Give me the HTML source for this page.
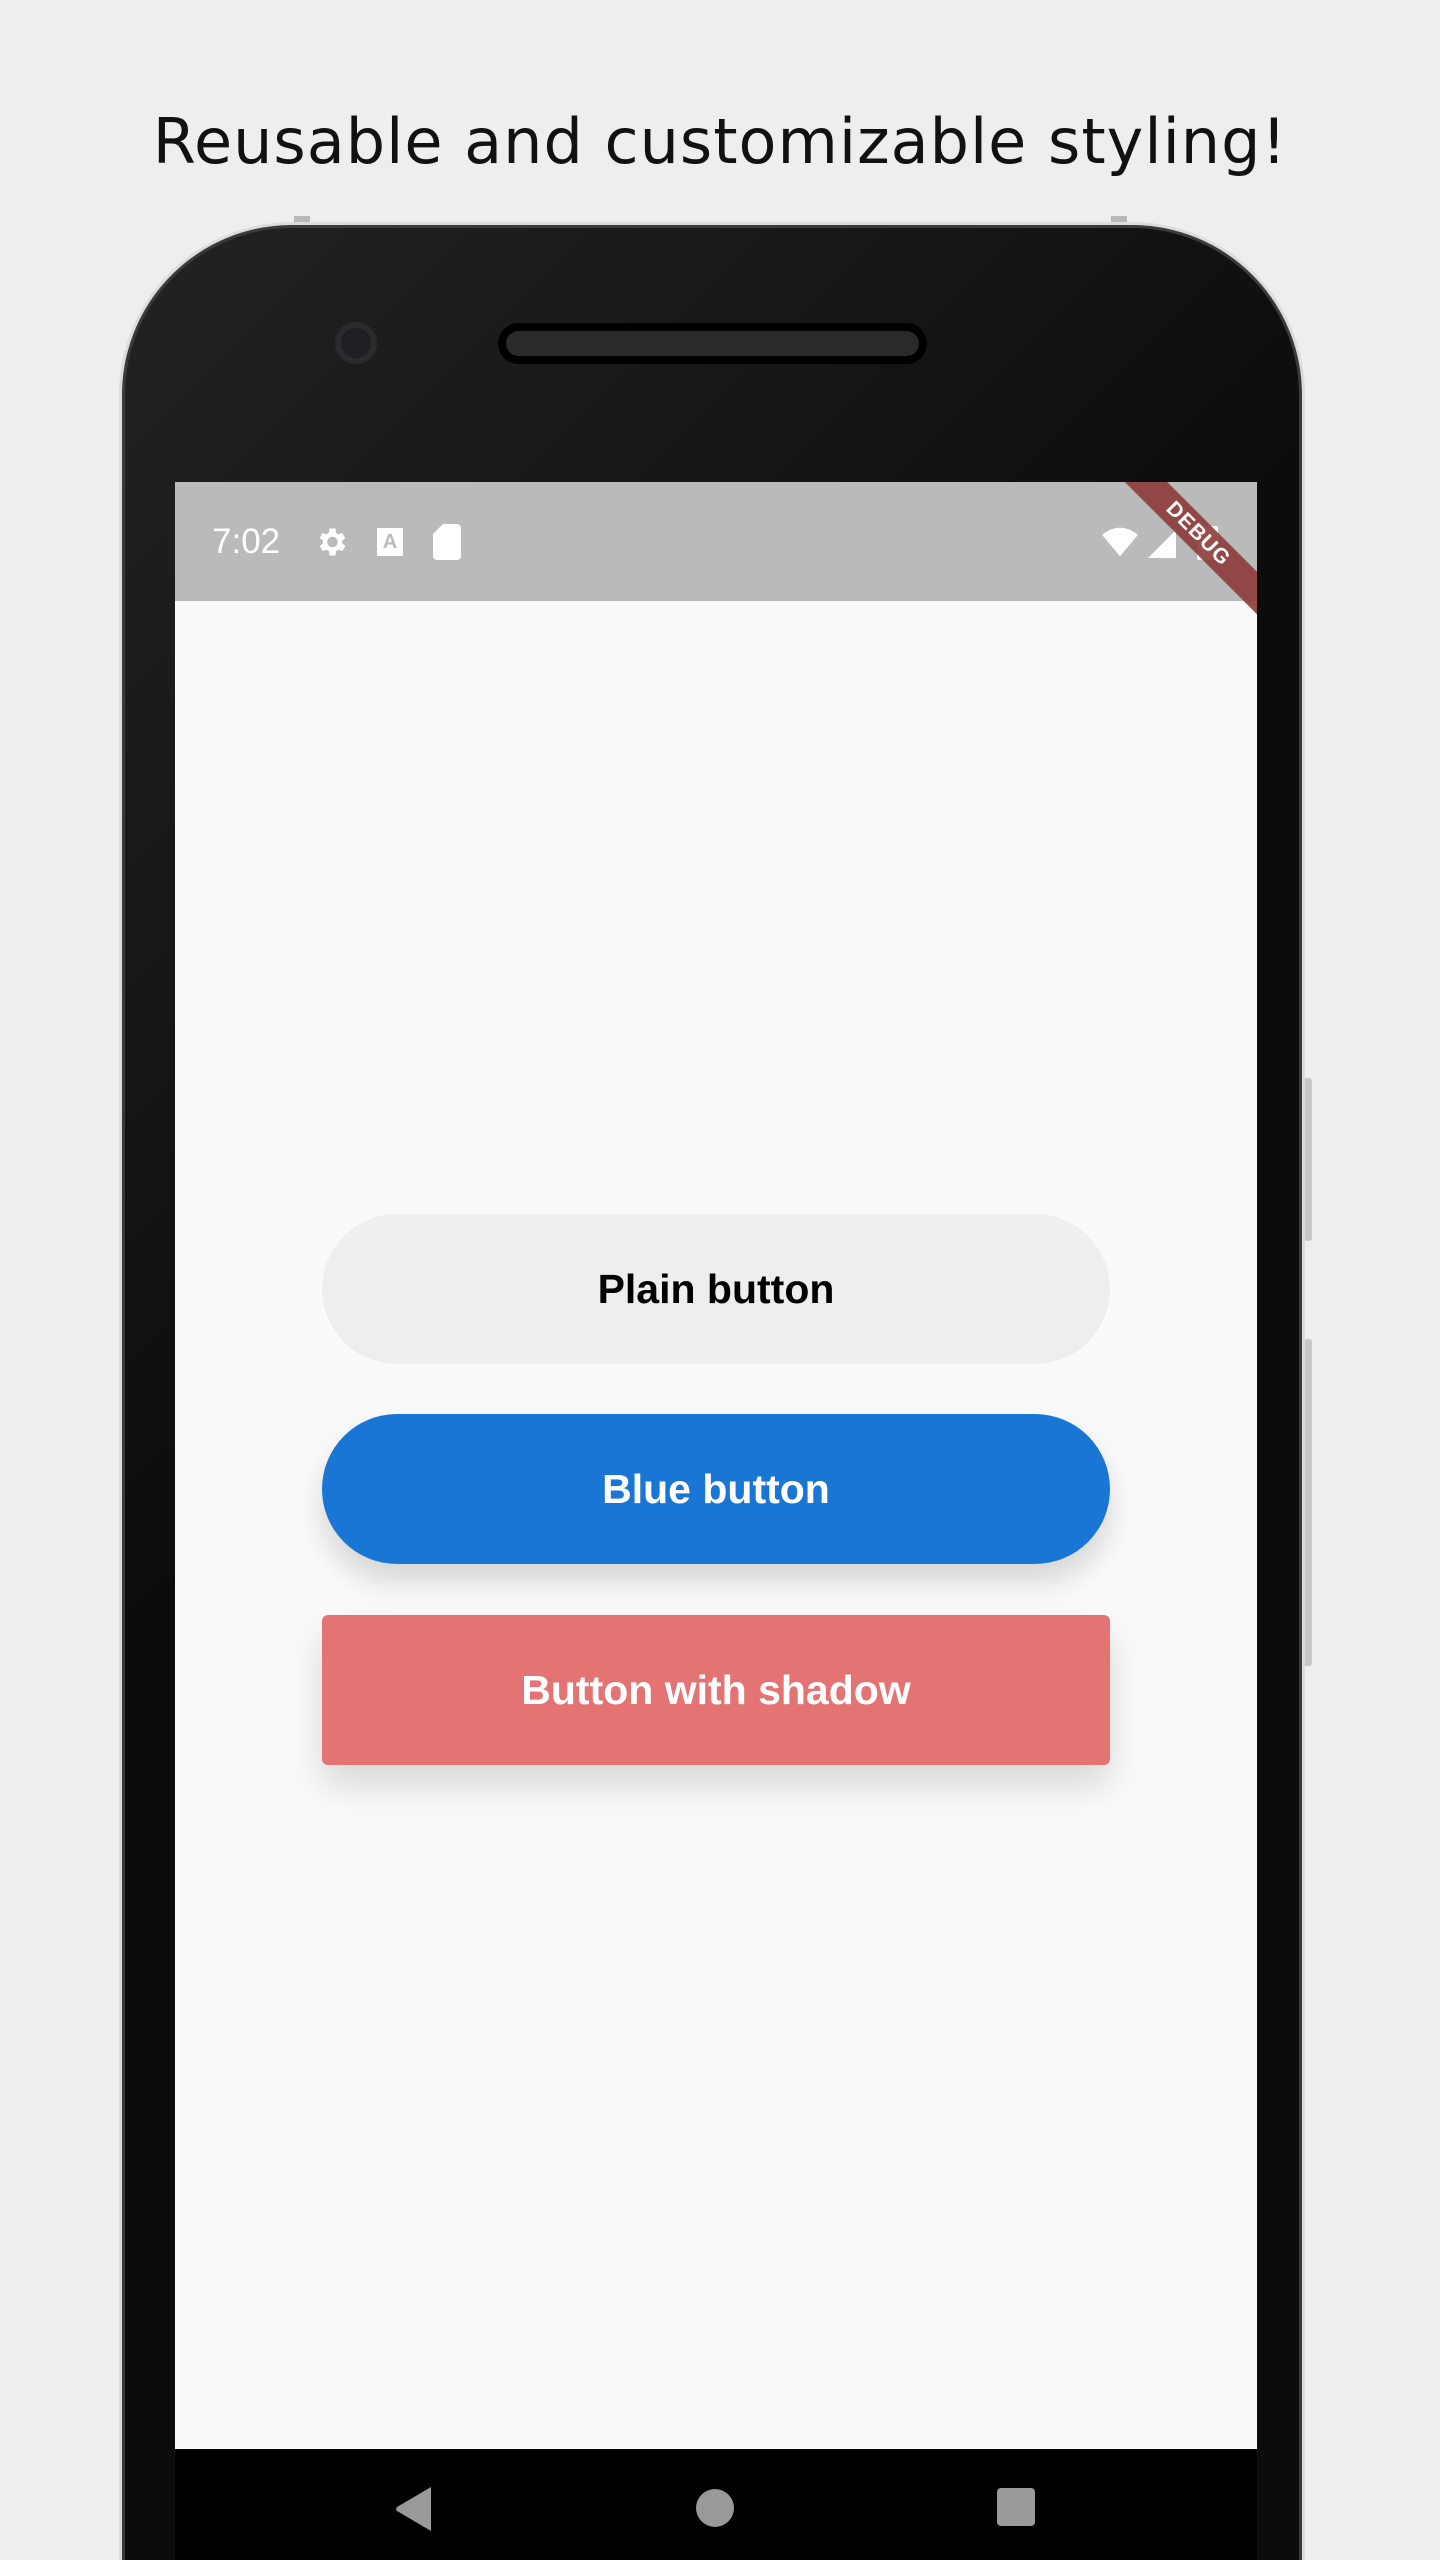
<!DOCTYPE html>
<html><head><meta charset="utf-8"><style>
*{margin:0;padding:0;box-sizing:border-box}
html,body{width:1440px;height:2560px;overflow:hidden}
body{background:#eeeeee;position:relative;font-family:"Liberation Sans",sans-serif}
.title{position:absolute;top:105px;left:0;width:1440px;text-align:center;font-family:"DejaVu Sans",sans-serif;font-size:62px;color:#111;letter-spacing:1px}
.tab{position:absolute;background:#b8b8b8;width:16px;height:14px;top:216px}
.phone{position:absolute;left:122px;top:225px;width:1180px;height:2400px;border-radius:170px 170px 0 0;background:linear-gradient(135deg,#232323,#0c0c0c 40%);border:3px solid #3a3a3a;box-shadow:0 0 0 3px #dcdcdc}
.sidebtn{position:absolute;background:#c8c8c8;width:8px;border-radius:3px}
.cam{position:absolute;left:335px;top:322px;width:42px;height:42px;border-radius:50%;background:#202024;border:6px solid #2b2b2e}
.spk{position:absolute;left:498px;top:323px;width:429px;height:41px;border-radius:21px;background:#000}
.spk div{position:absolute;left:8px;top:8px;right:8px;bottom:8px;border-radius:13px;background:#2a2a2a}
.screen{position:absolute;left:175px;top:482px;width:1082px;height:1967px;background:#fafafa;overflow:hidden}
.status{position:absolute;left:0;top:0;width:100%;height:119px;background:#bababa;color:#fff}
.nav{position:absolute;left:175px;top:2449px;width:1082px;height:111px;background:#000}
.btn{position:absolute;left:322px;width:788px;height:150px;display:flex;align-items:center;justify-content:center;font-weight:bold;font-size:41px}
</style></head><body>
<div class="title">Reusable and customizable styling!</div>
<div class="tab" style="left:294px"></div><div class="tab" style="left:1111px"></div>
<div class="sidebtn" style="left:1304px;top:1078px;height:163px"></div>
<div class="sidebtn" style="left:1304px;top:1339px;height:327px"></div>
<div class="phone"></div>
<div class="cam"></div>
<div class="spk"><div></div></div>
<div class="screen">
 <div class="status">
  <div style="position:absolute;left:37px;top:40px;font-size:35px">7:02</div>
  <svg style="position:absolute;left:138px;top:42px" width="36" height="36" viewBox="0 0 24 24"><path fill="#fff" d="M19.4 13a7.5 7.5 0 000-2l2.1-1.6-2-3.5-2.5 1a7 7 0 00-1.7-1L15 3h-4l-.4 2.9a7 7 0 00-1.7 1l-2.5-1-2 3.5L6.6 11a7.5 7.5 0 000 2l-2.1 1.6 2 3.5 2.5-1a7 7 0 001.7 1L11 21h4l.4-2.9a7 7 0 001.7-1l2.5 1 2-3.5zM13 15.5a3.5 3.5 0 110-7 3.5 3.5 0 010 7z"/></svg>
  <div style="position:absolute;left:202px;top:46px;width:26px;height:28px;background:#fff;color:#bababa;font-size:20px;font-weight:bold;text-align:center;line-height:28px">A</div>
  <svg style="position:absolute;left:258px;top:42px" width="28" height="36" viewBox="0 0 14 18"><path fill="#fff" d="M5 0h7a2 2 0 012 2v14a2 2 0 01-2 2H2a2 2 0 01-2-2V5z"/></svg>
  <svg style="position:absolute;left:927px;top:45px" width="36" height="30" viewBox="0 0 20 16"><path fill="#fff" d="M0 4Q10-4 20 4L10 16z"/></svg>
  <svg style="position:absolute;left:973px;top:48px" width="28" height="28" viewBox="0 0 14 14"><path fill="#fff" d="M14 0V14H0z"/></svg>
  <div style="position:absolute;left:1022px;top:44px;width:21px;height:34px;background:#fff;border-radius:2px"></div>
  <div style="position:absolute;left:903px;top:37px;width:240px;height:30px;background:#8e3b3b;transform:rotate(45deg);color:#fff;font-size:21px;font-weight:bold;text-align:center;line-height:30px;letter-spacing:1px;opacity:.9">DEBUG</div>
 </div>
</div>
<div class="btn" style="top:1214px;background:#eeeeee;border-radius:75px;color:#000">Plain button</div>
<div class="btn" style="top:1414px;background:#1a76d4;border-radius:75px;color:#fff;box-shadow:0 18px 30px rgba(0,0,0,.15)">Blue button</div>
<div class="btn" style="top:1615px;background:#e47373;border-radius:6px;color:#fff;box-shadow:0 20px 36px rgba(0,0,0,.14)">Button with shadow</div>
<div class="nav">
 <svg style="position:absolute;left:220px;top:38px" width="40" height="44" viewBox="0 0 20 22"><path fill="#999" d="M18 0V22L1 12Q0 11 1 10z"/></svg>
 <div style="position:absolute;left:521px;top:40px;width:38px;height:38px;border-radius:50%;background:#999"></div>
 <div style="position:absolute;left:822px;top:39px;width:38px;height:38px;border-radius:4px;background:#999"></div>
</div>
</body></html>
